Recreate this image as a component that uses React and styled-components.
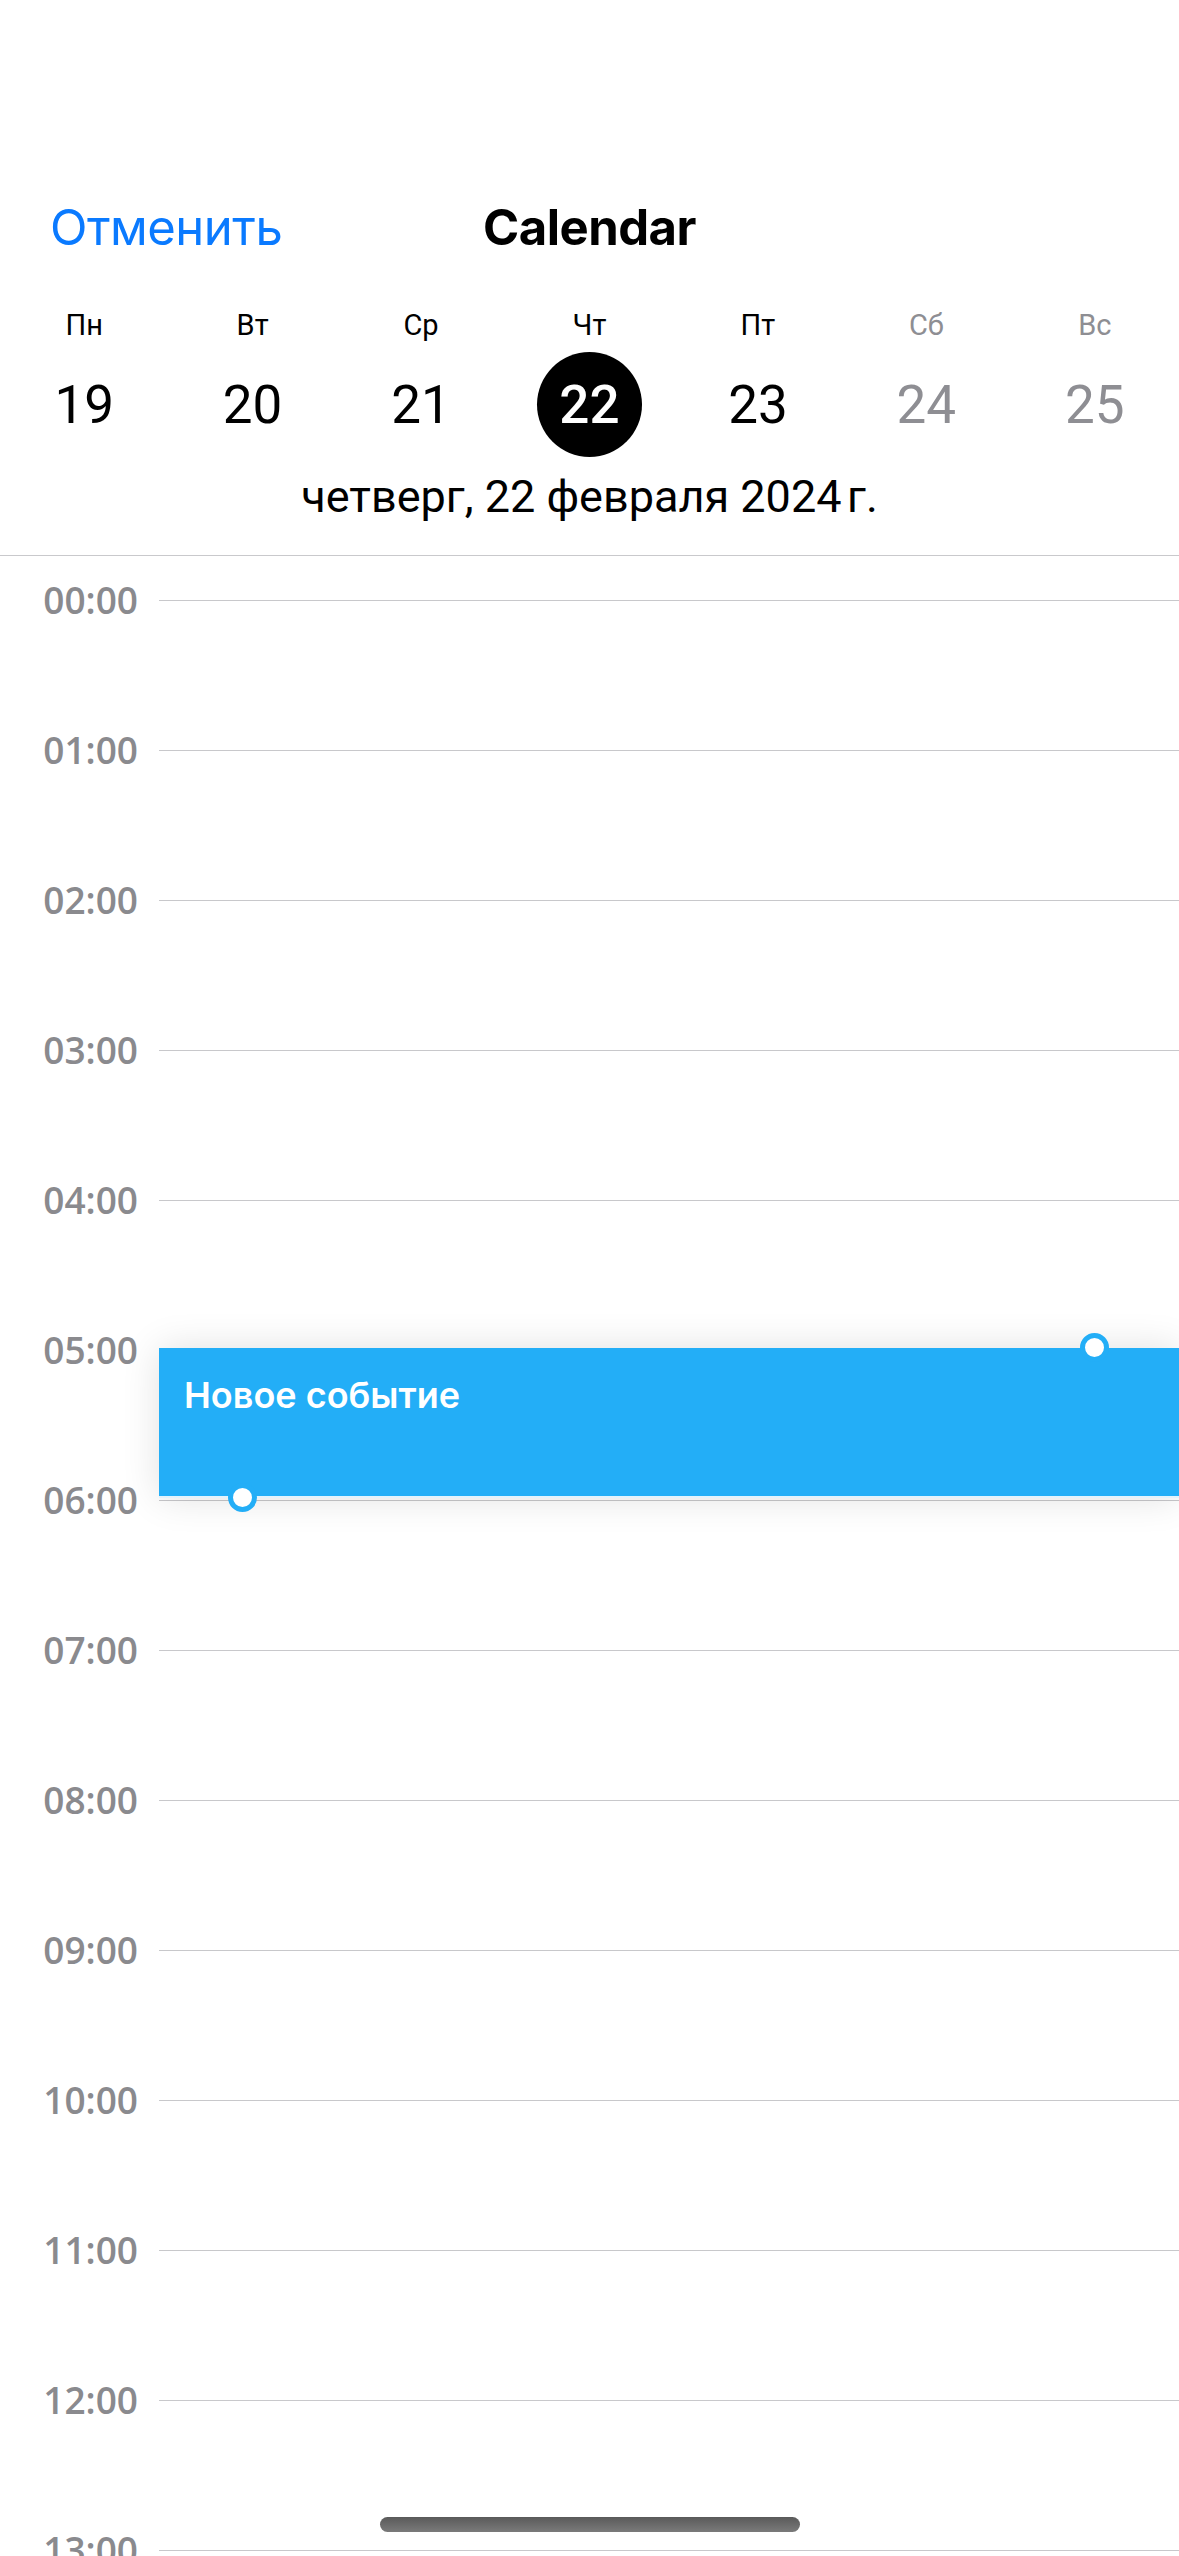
import React from "react";
import styled, { createGlobalStyle } from "styled-components";

const GlobalStyle = createGlobalStyle`
  html, body {
    margin: 0;
    padding: 0;
    background: #ffffff;
  }
  body {
    width: 1179px;
    height: 2556px;
    overflow: hidden;
    font-family: Inter, "Noto Sans", sans-serif;
  }
`;

const ROW_H = 150;
const HOURS = Array.from({ length: 24 }, (_, i) => `${String(i).padStart(2, "0")}:00`);

const days = [
  { short: "Пн", num: 19 },
  { short: "Вт", num: 20 },
  { short: "Ср", num: 21 },
  { short: "Чт", num: 22, selected: true },
  { short: "Пт", num: 23 },
  { short: "Сб", num: 24, weekend: true },
  { short: "Вс", num: 25, weekend: true },
];

const Screen = styled.div`
  position: relative;
  width: 1179px;
  height: 2556px;
  overflow: hidden;
  background: #fff;
`;

const Header = styled.header`
  padding-top: 190px;
  padding-bottom: 33px;
  border-bottom: 1px solid #c9c9cc;
`;

const NavBar = styled.div`
  display: grid;
  grid-template-columns: 1fr auto 1fr;
  align-items: center;
  height: 74px;
  padding: 0 50px;
`;

const CancelButton = styled.button`
  justify-self: start;
  border: none;
  background: none;
  padding: 0;
  font-family: Inter, "Noto Sans", sans-serif;
  font-size: 49px;
  font-weight: 400;
  color: #0a7aff;
  letter-spacing: -0.5px;
`;

const Title = styled.h1`
  margin: 0;
  font-size: 49px;
  font-weight: 700;
  color: #000;
  letter-spacing: -0.5px;
`;

const WeekGrid = styled.div`
  display: grid;
  grid-template-columns: repeat(7, 1fr);
  margin-top: 36px;
`;

const DayColumn = styled.div`
  display: flex;
  flex-direction: column;
  align-items: center;
  gap: 2px;
`;

const DayName = styled.span`
  font-family: Roboto, "Noto Sans", sans-serif;
  font-size: 29px;
  line-height: 50px;
  color: ${(p) => (p.$weekend ? "#8e8e93" : "#000")};
`;

const DayNumber = styled.span`
  display: flex;
  align-items: center;
  justify-content: center;
  width: 105px;
  height: 105px;
  border-radius: 50%;
  font-family: Roboto, "Noto Sans", sans-serif;
  font-size: 53px;
  font-weight: ${(p) => (p.$selected ? 500 : 400)};
  background: ${(p) => (p.$selected ? "#000" : "transparent")};
  color: ${(p) => (p.$selected ? "#fff" : p.$weekend ? "#8e8e93" : "#000")};
`;

const DateLine = styled.div`
  margin-top: 15px;
  text-align: center;
  font-family: Roboto, "Noto Sans", sans-serif;
  font-size: 45px;
  line-height: 50px;
  color: #000;
`;

const Timeline = styled.div`
  position: relative;
  padding-top: 44px;
`;

const HourRow = styled.div`
  display: grid;
  grid-template-columns: 138px 1fr;
  column-gap: 21px;
  align-items: start;
  height: ${ROW_H}px;
`;

const HourLabel = styled.span`
  margin-top: -22px;
  text-align: right;
  font-family: "Open Sans", "Noto Sans", sans-serif;
  font-size: 37px;
  font-weight: 600;
  line-height: 44px;
  color: #8a8a8e;
`;

const HourLine = styled.div`
  height: 1px;
  background: #c8c8cb;
`;

const EventBlock = styled.div`
  position: absolute;
  left: 159px;
  right: 0;
  top: ${(p) => 44 + p.$start * ROW_H - 2}px;
  height: ${(p) => p.$hours * ROW_H}px;
  background: #23aef7;
  box-shadow: 0 0 36px rgba(0, 0, 0, 0.12);
  border-bottom: 2px solid #e3f3fc;
  box-sizing: border-box;
  padding: 25px 25px;
`;

const EventTitle = styled.span`
  font-family: Inter, "Noto Sans", sans-serif;
  font-size: 36px;
  font-weight: 600;
  color: #fff;
`;

const Handle = styled.span`
  position: absolute;
  width: 19px;
  height: 19px;
  border-radius: 50%;
  background: #fff;
  border: 5px solid #23aef7;
  ${(p) => (p.$top ? "top: -15px; right: 70px;" : "bottom: -16px; left: 69px;")}
`;

const HomeIndicator = styled.div`
  position: absolute;
  left: 50%;
  bottom: 24px;
  width: 420px;
  height: 15px;
  margin-left: -210px;
  border-radius: 8px;
  background: linear-gradient(#5a5a5a, #7a7a7a);
`;

export default function App() {
  return (
    <Screen>
      <GlobalStyle />
      <Header>
        <NavBar>
          <CancelButton>Отменить</CancelButton>
          <Title>Calendar</Title>
          <span />
        </NavBar>
        <WeekGrid>
          {days.map((d) => (
            <DayColumn key={d.num}>
              <DayName $weekend={d.weekend}>{d.short}</DayName>
              <DayNumber $weekend={d.weekend} $selected={d.selected}>
                {d.num}
              </DayNumber>
            </DayColumn>
          ))}
        </WeekGrid>
        <DateLine>четверг, 22 февраля 2024{"\u202F"}г.</DateLine>
      </Header>
      <Timeline>
        {HOURS.map((h) => (
          <HourRow key={h}>
            <HourLabel>{h}</HourLabel>
            <HourLine />
          </HourRow>
        ))}
        <EventBlock $start={5} $hours={1}>
          <EventTitle>Новое событие</EventTitle>
          <Handle $top />
          <Handle />
        </EventBlock>
      </Timeline>
      <HomeIndicator />
    </Screen>
  );
}
